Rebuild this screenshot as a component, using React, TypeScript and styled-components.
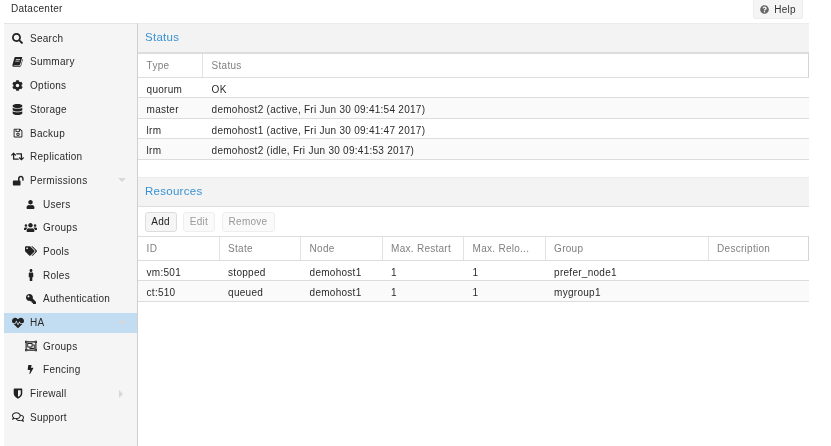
import React from "react";
import styled, { createGlobalStyle } from "styled-components";
import { FaSearch, FaCog, FaDatabase, FaRegSave, FaRetweet, FaUser, FaUsers, FaTags, FaMale, FaKey, FaHeartbeat, FaRegObjectGroup, FaBolt, FaRegComments, FaQuestionCircle } from "react-icons/fa";

const Global = createGlobalStyle`
  html, body { margin: 0; padding: 0; background: #fff; }
  body { font-family: "Liberation Sans", Arial, sans-serif; font-size: 10px; color: #2b2b2b; letter-spacing: 0.27px; overflow: hidden; }
`;

const Page = styled.div`width: 831px; height: 446px; display: flex; flex-direction: column; overflow: hidden; filter: blur(0.3px);`;
const TopBar = styled.header`height: 23px; flex: none; display: flex; justify-content: space-between; padding: 0 28px 0 11px;`;
const Crumb = styled.span`line-height: 18px;`;
const HelpButton = styled.button`
  width: 50px; height: 19px; display: flex; align-items: center; justify-content: center; gap: 5px;
  border: 1px solid #ececec; border-top: 0; border-radius: 0 0 3px 3px; background: #f5f5f5; color: #333;
  font: inherit; letter-spacing: inherit; padding: 0;
  svg { color: #666; }
`;
const Body = styled.div`flex: 1; display: flex; padding: 0 22px 0 4px; min-height: 0;`;
const Sidebar = styled.nav`width: 134px; flex: none; box-sizing: border-box; background: #f5f5f5; border-top: 1px solid #e4e4e4; border-right: 1px solid #cfcfcf; padding-top: 4.3px;`;
const NavRow = styled.div<{ $child?: boolean; $active?: boolean }>`
  height: 20px; margin-bottom: 3.69px; display: flex; align-items: center; position: relative;
  padding-left: ${p => (p.$child ? 20 : 7)}px;
  background: ${p => (p.$active ? "#c2ddf2" : "transparent")};
`;
const NavIcon = styled.span`width: 13px; margin-right: 6px; display: flex; justify-content: center; color: #222; flex: none;`;
const Arrow = styled.span<{ $dir: "down" | "right" }>`
  position: absolute; width: 0; height: 0;
  ${p => p.$dir === "down"
    ? `right: 11px; top: 8px; border-left: 4px solid transparent; border-right: 4px solid transparent; border-top: 4px solid #d8d8d8;`
    : `right: 14px; top: 6px; border-top: 4px solid transparent; border-bottom: 4px solid transparent; border-left: 4px solid #d8d8d8;`}
`;
const Main = styled.main`flex: 1; min-width: 0; display: flex; flex-direction: column;`;
const SectionTitle = styled.h2`
  margin: 0; height: 30px; flex: none; box-sizing: border-box; background: #f3f3f3; border-top: 1px solid #ececec; border-bottom: 1px solid #ddd;
  padding-left: 7px; color: #3892d4; font-size: 11.5px; font-weight: 400; line-height: 26.5px;
`;
const HeadRow = styled.div`display: flex; height: 24.5px; flex: none; box-sizing: border-box; border-top: 1px solid #ddd; border-bottom: 1px solid #ddd; border-right: 1px solid #d4d4d4;`;
const HeadCell = styled.div<{ $w?: number }>`
  ${p => (p.$w ? `width:${p.$w}px; flex:none;` : "flex:1;")} box-sizing: border-box; padding-left: 8.6px; color: #808080; line-height: 23px; white-space: nowrap;
  &:not(:last-child) { border-right: 1px solid #e2e2e2; }
`;
const Row = styled.div<{ $alt?: boolean }>`display: flex; height: 20.6px; flex: none; box-sizing: border-box; border-bottom: 1px solid #ddd; background: ${p => (p.$alt ? "#fafafa" : "#fff")};`;
const Cell = styled.div<{ $w?: number }>`${p => (p.$w ? `width:${p.$w}px; flex:none;` : "flex:1;")} box-sizing: border-box; padding-left: 8.6px; line-height: 23px; height: 19.6px; white-space: nowrap;`;
const Spacer = styled.div`height: 17px; flex: none;`;
const Toolbar = styled.div`height: 29.3px; flex: none; display: flex; align-items: center; gap: 6.5px; padding-left: 6.5px; box-sizing: border-box;`;
const ToolButton = styled.button<{ $off?: boolean; $w: number }>`
  width: ${p => p.$w}px; height: 20px; padding: 0; box-sizing: border-box; border: 1px solid ${p => (p.$off ? "#eee" : "#ddd")}; border-radius: 3px;
  background: ${p => (p.$off ? "#fafafa" : "#f5f5f5")}; color: ${p => (p.$off ? "#999" : "#222")}; font: inherit; letter-spacing: inherit;
`;

const BookIcon = () => (
  <svg width="11" height="11" viewBox="0 0 16 16" fill="currentColor"><path d="M4.500 1.500H15l-3 10.500c-.3 1-1 1.500-2 1.500H3.200c-.7 0-.9.500-.4.700h8.700c.6 0 1-.3 1.200-.9l2.600-9 .7.600-2.700 9.400c-.2.900-1 1.400-1.900 1.400H2.700C1.400 15.700.5 14.800.6 13.300c0-.4.200-.8.3-1.200L3.500 2.800c.2-.8.500-1.300 1-1.300zM5.800 4.500l-.3 1h6l.3-1zM5 7l-.3 1h6l.3-1z" /></svg>
);
const ShieldIcon = () => (
  <svg width="10" height="11" viewBox="0 0 16 18" fill="currentColor"><path d="M2 1h12c.6 0 1 .4 1 1v7c0 4-3.500 6.800-7 8.500C4.500 15.800 1 13 1 9V2c0-.6.400-1 1-1zm6 2.500v11c2.400-1.300 4.500-3.200 4.500-5.500V3.500z" /></svg>
);
const UnlockIcon = () => (
  <svg width="12" height="11" viewBox="0 0 18 16" fill="currentColor"><path d="M1.500 8H9V5.500C9 3 11 1 13.300 1s4.200 2 4.200 4.500V7.500c0 .4-.3.700-.7.700h-.8c-.4 0-.7-.3-.7-.7V5.500c0-1.200-.9-2.200-2-2.200s-2 1-2 2.200V8h.5c.6 0 1 .4 1 1v5.500c0 .6-.4 1-1 1h-9.500c-.6 0-1-.4-1-1V9c0-.6.400-1 1-1z" /></svg>
);

const FlippedKey = styled(FaKey)`transform: scaleX(-1);`;

const nav: { label: string; icon: React.ReactNode; child?: boolean; active?: boolean; arrow?: "down" | "right" }[] = [
  { label: "Search", icon: <FaSearch size={11} /> },
  { label: "Summary", icon: <BookIcon /> },
  { label: "Options", icon: <FaCog size={11} /> },
  { label: "Storage", icon: <FaDatabase size={11} /> },
  { label: "Backup", icon: <FaRegSave size={10} /> },
  { label: "Replication", icon: <FaRetweet size={13} /> },
  { label: "Permissions", icon: <UnlockIcon />, arrow: "down" },
  { label: "Users", icon: <FaUser size={9} />, child: true },
  { label: "Groups", icon: <FaUsers size={13} />, child: true },
  { label: "Pools", icon: <FaTags size={12} />, child: true },
  { label: "Roles", icon: <FaMale size={12} />, child: true },
  { label: "Authentication", icon: <FlippedKey size={10} />, child: true },
  { label: "HA", icon: <FaHeartbeat size={12} />, active: true, arrow: "down" },
  { label: "Groups", icon: <FaRegObjectGroup size={12} />, child: true },
  { label: "Fencing", icon: <FaBolt size={9} />, child: true },
  { label: "Firewall", icon: <ShieldIcon />, arrow: "right" },
  { label: "Support", icon: <FaRegComments size={12} /> },
];

const statusRows = [
  ["quorum", "OK"],
  ["master", "demohost2 (active, Fri Jun 30 09:41:54 2017)"],
  ["lrm", "demohost1 (active, Fri Jun 30 09:41:47 2017)"],
  ["lrm", "demohost2 (idle, Fri Jun 30 09:41:53 2017)"],
];
const cols = [81.5, 81.5, 81.5, 81.5, 81.5, 163];
const resHead = ["ID", "State", "Node", "Max. Restart", "Max. Relo...", "Group", "Description"];
const resRows = [
  ["vm:501", "stopped", "demohost1", "1", "1", "prefer_node1", ""],
  ["ct:510", "queued", "demohost1", "1", "1", "mygroup1", ""],
];

export default function App() {
  return (
    <Page>
      <Global />
      <TopBar>
        <Crumb>Datacenter</Crumb>
        <HelpButton><FaQuestionCircle size={9} />Help</HelpButton>
      </TopBar>
      <Body>
        <Sidebar>
          {nav.map((n, i) => (
            <NavRow key={i} $child={n.child} $active={n.active}>
              <NavIcon>{n.icon}</NavIcon>
              {n.label}
              {n.arrow && <Arrow $dir={n.arrow} />}
            </NavRow>
          ))}
        </Sidebar>
        <Main>
          <SectionTitle>Status</SectionTitle>
          <HeadRow>
            <HeadCell $w={65}>Type</HeadCell>
            <HeadCell>Status</HeadCell>
          </HeadRow>
          {statusRows.map((r, i) => (
            <Row key={i} $alt={i % 2 === 1}>
              <Cell $w={65}>{r[0]}</Cell>
              <Cell>{r[1]}</Cell>
            </Row>
          ))}
          <Spacer />
          <SectionTitle>Resources</SectionTitle>
          <Toolbar>
            <ToolButton $w={32}>Add</ToolButton>
            <ToolButton $off $w={32}>Edit</ToolButton>
            <ToolButton $off $w={53}>Remove</ToolButton>
          </Toolbar>
          <HeadRow>
            {resHead.map((h, i) => <HeadCell key={h} $w={cols[i]}>{h}</HeadCell>)}
          </HeadRow>
          {resRows.map((r, i) => (
            <Row key={i} $alt={i % 2 === 1}>
              {r.map((c, j) => <Cell key={j} $w={cols[j]}>{c}</Cell>)}
            </Row>
          ))}
        </Main>
      </Body>
    </Page>
  );
}
